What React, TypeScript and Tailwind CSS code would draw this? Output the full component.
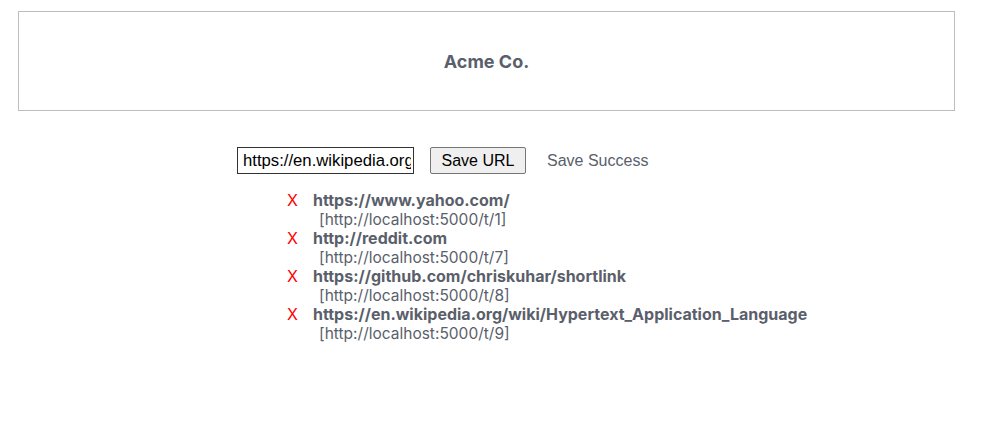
const links = [
    { url: 'https://www.yahoo.com/', short: 'http://localhost:5000/t/1' },
    { url: 'http://reddit.com', short: 'http://localhost:5000/t/7' },
    { url: 'https://github.com/chriskuhar/shortlink', short: 'http://localhost:5000/t/8' },
    { url: 'https://en.wikipedia.org/wiki/Hypertext_Application_Language', short: 'http://localhost:5000/t/9' },
];

export default function App() {
    return (
        <div className="min-h-[425px] bg-white font-['Inter',sans-serif] text-[#5a5f6b]">
            <div className="pt-[11px] pl-[18px]">
                <div className="flex h-[100px] w-[937px] items-center justify-center border border-[#bdbdbd]">
                    <h1 className="text-[18px] font-bold">Acme Co.</h1>
                </div>
            </div>

            <div className="flex items-center pt-[36px] pl-[237px] font-['Liberation_Sans',Arial,sans-serif]">
                <input
                    className="h-[27px] w-[177px] border border-[#333] pr-[2px] pl-[5px] text-[16.7px] text-black outline-none"
                    defaultValue="https://en.wikipedia.org/wiki/Hypertext_Application_Language"
                />
                <button className="ml-[16px] h-[27px] w-[96px] rounded-[2px] border border-[#767676] bg-[#efefef] text-[16px] text-black">
                    Save URL
                </button>
                <span className="ml-[21px] text-[16px]">Save Success</span>
            </div>

            <ul className="pt-[17px] pl-[287px] text-[16px] leading-[19px]">
                {links.map((link) => (
                    <li key={link.short}>
                        <div className="flex">
                            <span className="w-[26px] text-[#ff0000]">X</span>
                            <span className="font-bold">{link.url}</span>
                        </div>
                        <div className="pl-[32px] text-[15.5px]">[{link.short}]</div>
                    </li>
                ))}
            </ul>
        </div>
    );
}
